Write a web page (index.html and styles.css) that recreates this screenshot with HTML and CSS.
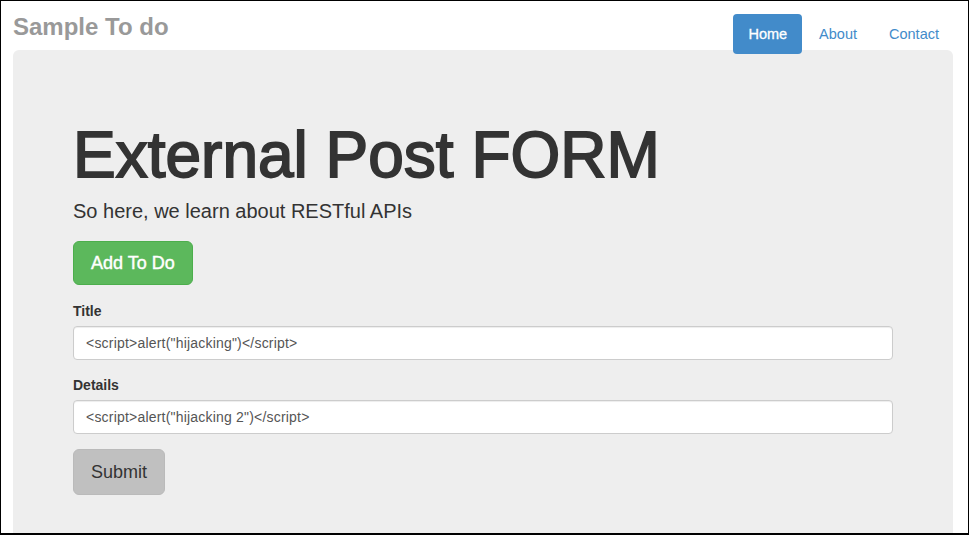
FILE: index.html
```html
<!DOCTYPE html>
<html lang="en">
<head>
    <meta charset="UTF-8">
    <meta name="viewport" content="width=device-width, initial-scale=1.0">
    <title>Sample To do</title>
    <link rel="stylesheet" href="styles.css">
</head>
<body>
    <div class="frame">
        <div class="header">
            <h3 class="brand">Sample To do</h3>
            <ul class="nav-pills">
                <li><a href="#" class="active">Home</a></li>
                <li><a href="#">About</a></li>
                <li><a href="#">Contact</a></li>
            </ul>
        </div>

        <div class="jumbotron">
            <h1>External Post FORM</h1>
            <p class="lead">So here, we learn about RESTful APIs</p>
            <button class="btn btn-success">Add To Do</button>

            <form class="todo-form" onsubmit="return false;">
                <div class="form-group">
                    <label for="title">Title</label>
                    <input type="text" id="title" class="form-control" value="&lt;script&gt;alert(&quot;hijacking&quot;)&lt;/script&gt;">
                </div>
                <div class="form-group">
                    <label for="details">Details</label>
                    <input type="text" id="details" class="form-control" value="&lt;script&gt;alert(&quot;hijacking 2&quot;)&lt;/script&gt;">
                </div>
                <button type="submit" class="btn btn-submit">Submit</button>
            </form>
        </div>
    </div>
</body>
</html>
```

FILE: styles.css
```css
* {
    margin: 0;
    padding: 0;
    box-sizing: border-box;
}

body {
    font-family: 'Liberation Sans', Arial, sans-serif;
    font-size: 14px;
    color: #333;
    background: white;
}

.frame {
    height: 535px;
    border: 1px solid #000;
    border-bottom-width: 2px;
    overflow: hidden;
}

.header {
    height: 49px;
    display: flex;
    justify-content: space-between;
    align-items: flex-start;
    padding: 13px 14px 0 12px;
}

.brand {
    font-size: 24px;
    line-height: 26px;
    font-weight: bold;
    color: #999;
}

.nav-pills {
    list-style: none;
    display: flex;
    gap: 2px;
    position: relative;
    z-index: 1;
}

.nav-pills a {
    display: block;
    padding: 10px 15px;
    line-height: 20px;
    font-size: 14.5px;
    color: #428bca;
    text-decoration: none;
    border-radius: 4px;
}

.nav-pills a.active {
    background: #428bca;
    color: white;
    -webkit-text-stroke: 0.3px white;
}

.jumbotron {
    margin: 0 15px 0 12px;
    padding: 48px 60px;
    background: #eee;
    border-radius: 6px;
    min-height: 600px;
}

.jumbotron h1 {
    font-size: 64px;
    line-height: 70px;
    font-weight: normal;
    margin: 22px 0 6px;
    color: #333;
    -webkit-text-stroke: 1.8px #333;
}

.lead {
    font-size: 20px;
    line-height: 30px;
    margin-bottom: 15px;
}

.btn {
    display: inline-block;
    font-family: inherit;
    font-size: 18px;
    line-height: 24px;
    padding: 9px 17px;
    border: 1px solid transparent;
    border-radius: 6px;
    cursor: pointer;
}

.btn-success {
    background: #5cb85c;
    border-color: #4cae4c;
    color: white;
    margin-bottom: 16px;
    -webkit-text-stroke: 0.4px white;
}

.btn-submit {
    background: #c0c0c0;
    border-color: #bababa;
    color: #333;
    padding: 10px 17px;
}

.form-group {
    margin-bottom: 15px;
}

.form-group label {
    display: block;
    font-weight: bold;
    line-height: 20px;
    margin-bottom: 5px;
}

.form-control {
    display: block;
    width: 100%;
    height: 34px;
    padding: 6px 12px;
    font-family: inherit;
    font-size: 14px;
    line-height: 20px;
    letter-spacing: 0.2px;
    color: #555;
    background: white;
    border: 1px solid #ccc;
    border-radius: 4px;
    box-shadow: inset 0 1px 1px rgba(0, 0, 0, 0.075);
}
```
